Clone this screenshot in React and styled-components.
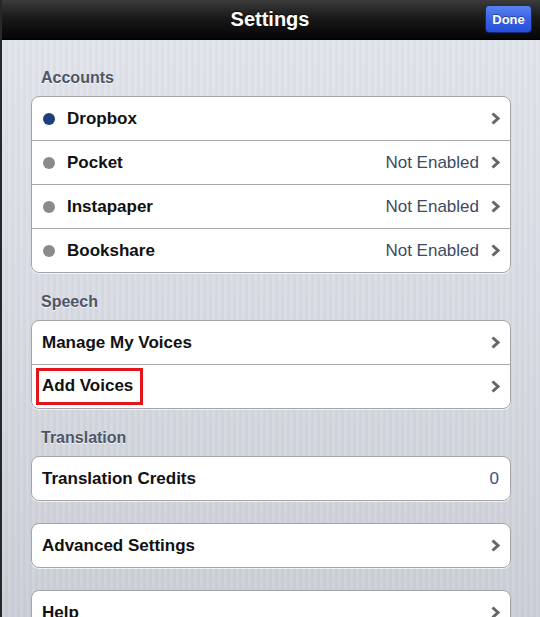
import React from 'react';
import styled, { createGlobalStyle } from 'styled-components';

const GlobalStyle = createGlobalStyle`
  html, body {
    margin: 0;
    padding: 0;
    background: #1b1b1b;
  }
  body {
    font-family: "Liberation Sans", Arial, Helvetica, sans-serif;
  }
`;

const Screen = styled.div`
  width: 540px;
  height: 617px;
  overflow: hidden;
  display: flex;
  flex-direction: column;
  border-left: 2px solid #262829;
  box-sizing: border-box;
`;

const NavBar = styled.div`
  height: 40px;
  flex-shrink: 0;
  position: relative;
  display: flex;
  align-items: center;
  justify-content: center;
  background: linear-gradient(#3b3b3b 0%, #1a1a1a 45%, #050505 100%);
  border-bottom: 1px solid #000;
  box-sizing: border-box;
`;

const Title = styled.div`
  color: #fff;
  font-size: 20px;
  font-weight: bold;
  margin-left: -2px;
  text-shadow: 0 -1px 0 rgba(0, 0, 0, 0.6);
`;

const DoneButton = styled.div`
  position: absolute;
  right: 8px;
  top: 5px;
  width: 47px;
  height: 28px;
  display: flex;
  align-items: center;
  justify-content: center;
  border-radius: 4px;
  background: linear-gradient(#5b82f0 0%, #3862e6 50%, #2550d8 100%);
  border: 1px solid #142a70;
  box-sizing: border-box;
  color: #fff;
  font-size: 13px;
  font-weight: bold;
  text-shadow: 0 -1px 0 rgba(0, 0, 0, 0.4);
`;

const Body = styled.div`
  flex: 1;
  padding: 28px 29px 0 29px;
  background:
    repeating-linear-gradient(90deg, rgba(255, 255, 255, 0.07) 0 3px, rgba(0, 0, 0, 0.015) 3px 6px),
    linear-gradient(#e0e3ea 0%, #d7dae2 45%, #c9ccd4 100%);
  display: flex;
  flex-direction: column;
`;

const SectionLabel = styled.div`
  height: 20px;
  line-height: 20px;
  padding-left: 10px;
  margin-bottom: 8px;
  font-size: 16px;
  font-weight: bold;
  color: #4d5567;
  text-shadow: 0 1px 0 rgba(255, 255, 255, 0.8);
`;

const Group = styled.div`
  width: 478px;
  background: #fff;
  border: 1px solid #a3a4a8;
  border-radius: 8px;
  box-shadow: 0 1px 0 rgba(255, 255, 255, 0.7);
  margin-bottom: ${(p) => p.$gap || 19}px;
  overflow: hidden;
  flex-shrink: 0;
`;

const Row = styled.div`
  height: 43px;
  display: flex;
  align-items: center;
  padding: 0 ${(p) => (p.$noChevron ? 11 : 10)}px 0 ${(p) => (p.$dot ? 11 : 10)}px;
  & + & {
    border-top: 1px solid #a8a9ad;
  }
`;

const Dot = styled.span`
  width: 12px;
  height: 12px;
  border-radius: 50%;
  background: ${(p) => (p.$on ? '#1f3f7c' : '#8a8a8a')};
  margin-right: 12px;
  flex-shrink: 0;
`;

const Label = styled.span`
  font-size: 17px;
  font-weight: bold;
  color: #111;
  flex: 1;
  line-height: 20px;
`;

const Marked = styled.span`
  display: inline-block;
  border: 3px solid #e2141c;
  padding: 5px 7px 6px 3px;
  margin-left: -6px;
  line-height: 20px;
`;

const Value = styled.span`
  font-size: 17px;
  color: ${(p) => (p.$blue ? '#385487' : '#3d4a64')};
  margin-right: ${(p) => (p.$last ? 0 : 12)}px;
`;

const Chevron = () => (
  <svg width="9" height="13" viewBox="0 0 9 13">
    <polyline points="1.5,1.5 7,6.5 1.5,11.5" fill="none" stroke="#666" strokeWidth="3" />
  </svg>
);

const accounts = [
  { name: 'Dropbox', on: true },
  { name: 'Pocket', value: 'Not Enabled' },
  { name: 'Instapaper', value: 'Not Enabled' },
  { name: 'Bookshare', value: 'Not Enabled' },
];

export default function App() {
  return (
    <>
      <GlobalStyle />
      <Screen>
        <NavBar>
          <Title>Settings</Title>
          <DoneButton>Done</DoneButton>
        </NavBar>
        <Body>
          <SectionLabel>Accounts</SectionLabel>
          <Group>
            {accounts.map((a) => (
              <Row key={a.name} $dot>
                <Dot $on={a.on} />
                <Label>{a.name}</Label>
                {a.value && <Value>{a.value}</Value>}
                <Chevron />
              </Row>
            ))}
          </Group>

          <SectionLabel>Speech</SectionLabel>
          <Group>
            <Row>
              <Label>Manage My Voices</Label>
              <Chevron />
            </Row>
            <Row>
              <Label>
                <Marked>Add Voices</Marked>
              </Label>
              <Chevron />
            </Row>
          </Group>

          <SectionLabel>Translation</SectionLabel>
          <Group $gap={22}>
            <Row $noChevron>
              <Label>Translation Credits</Label>
              <Value $blue $last>0</Value>
            </Row>
          </Group>

          <Group $gap={22}>
            <Row>
              <Label>Advanced Settings</Label>
              <Chevron />
            </Row>
          </Group>

          <Group>
            <Row>
              <Label>Help</Label>
              <Chevron />
            </Row>
          </Group>
        </Body>
      </Screen>
    </>
  );
}
